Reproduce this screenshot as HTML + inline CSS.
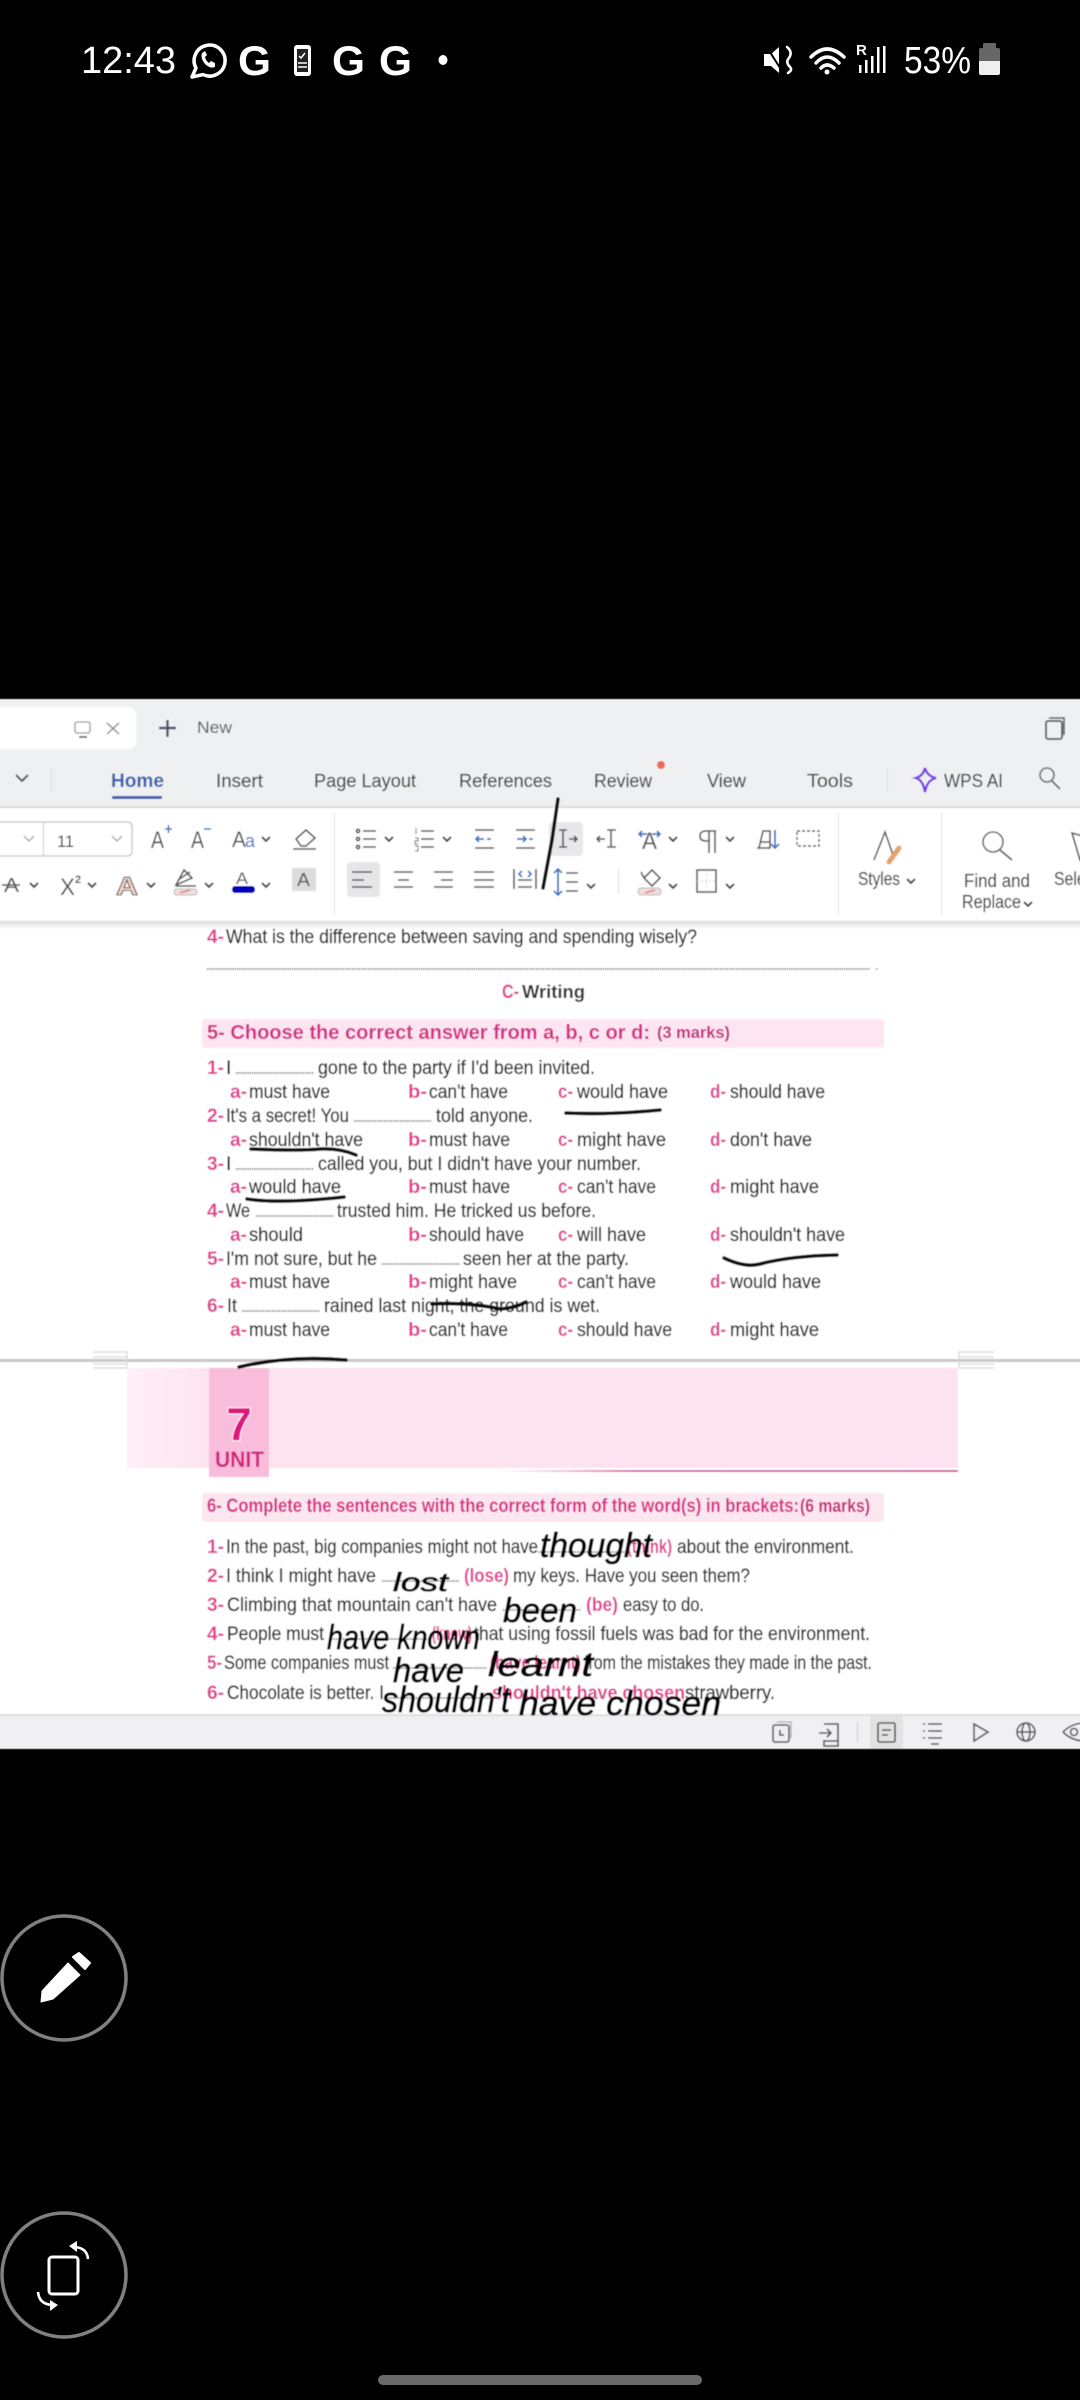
<!DOCTYPE html>
<html>
<head>
<meta charset="utf-8">
<style>
html,body{margin:0;padding:0;background:#000;width:1080px;height:2400px;overflow:hidden}
svg{display:block;position:absolute;left:0;top:0}
text{font-family:"Liberation Sans",sans-serif}
.u{font-size:17px;fill:#555}
.t{font-size:18px;fill:#4a4a4a;stroke:#4a4a4a;stroke-width:.15px}
.d{font-size:19px;fill:#2a2a2a;stroke:#2a2a2a;stroke-width:.25px}
.p{font-size:19px;fill:#e2408f;font-weight:bold}
.h{font-size:19px;fill:#d42e84;font-weight:bold}
.k{font-style:italic;fill:#000;stroke:#000;stroke-width:.7px}
.s{fill:none;stroke:#555;stroke-width:1.6}
.b{fill:none;stroke:#3f74c4;stroke-width:1.8}
.n{fill:none;stroke:#111;stroke-width:3.6;stroke-linecap:round}
.w{fill:none;stroke:#fff;stroke-width:3.5;stroke-linecap:round}
.o{fill:none;stroke:#555;stroke-width:1.6;stroke-dasharray:1.3 1}
</style>
</head>
<body>
<svg width="1080" height="2400" viewBox="0 0 1080 2400" xmlns="http://www.w3.org/2000/svg">
<defs>
<filter id="bl" x="-2%" y="-2%" width="104%" height="104%"><feGaussianBlur stdDeviation="0.55"/></filter>
<path id="c" d="M-4 -2L0 2L4 -2" fill="none" stroke="#444" stroke-width="2"/>
<linearGradient id="fade" x1="0" x2="1" y1="0" y2="0"><stop offset="0" stop-color="#fff0f7"/><stop offset="1" stop-color="#fde3f0"/></linearGradient>
<linearGradient id="ln" x1="0" x2="1" y1="0" y2="0"><stop offset="0" stop-color="#e8b4d0" stop-opacity="0"/><stop offset=".3" stop-color="#d86aa8"/><stop offset="1" stop-color="#d05a9c"/></linearGradient>
<linearGradient id="sh" x1="0" x2="0" y1="0" y2="1"><stop offset="0" stop-color="#e6e6e6"/><stop offset="1" stop-color="#fff"/></linearGradient>
</defs>

<rect width="1080" height="2400" fill="#000"/>

<!-- status bar -->
<g fill="#fff">
<text x="81" y="73" font-size="38" textLength="95" lengthAdjust="spacingAndGlyphs" fill="#fff">12:43</text>
<path d="M192 77L196 68A15.5 15.5 0 1 1 203 74.6Z" fill="none" stroke="#fff" stroke-width="3.5" stroke-linejoin="round"/>
<path d="M202 53Q200 58 205 64Q210 69 215 67L215 63L211 61L209 63Q206 61 205 57L207 55L205 51Z"/>
<text x="238" y="75" font-size="42" font-weight="bold" textLength="33" lengthAdjust="spacingAndGlyphs" fill="#fff">G</text>
<rect x="294" y="45" width="17" height="31" rx="3"/>
<rect x="297" y="49" width="11" height="23" fill="#222"/>
<path d="M299 56l2 2 4-5" fill="none" stroke="#fff" stroke-width="1.5"/>
<path d="M298 63h9M298 67h9" stroke="#fff" stroke-width="1.5"/>
<text x="332" y="75" font-size="42" font-weight="bold" textLength="33" lengthAdjust="spacingAndGlyphs" fill="#fff">G</text>
<text x="379" y="75" font-size="42" font-weight="bold" textLength="33" lengthAdjust="spacingAndGlyphs" fill="#fff">G</text>
<ellipse cx="443" cy="60" rx="4.5" ry="5"/>
<path d="M764 54L771 54L779 47L779 73L771 66L764 66Z"/>
<path d="M787 47Q793 52 789 58Q785 62 790 67Q793 70 788 73" class="w" style="stroke-width:2.5"/>
<path d="M768 49L782 71" stroke="#000" stroke-width="2"/>
<path d="M811 57Q827 41 844 57M816 63Q827 51 839 63M821 68Q827 62 834 68" class="w"/>
<circle cx="827" cy="72" r="2.5"/>
<text x="856" y="55" font-size="15" font-weight="bold" fill="#fff">R</text>
<rect x="859" y="65" width="2.5" height="8"/><rect x="865" y="60" width="2.5" height="13"/><rect x="871" y="56" width="2.5" height="17"/><rect x="877" y="47" width="2.5" height="26"/><rect x="883" y="46" width="2.5" height="27"/>
<text x="904" y="73" font-size="38" textLength="67" lengthAdjust="spacingAndGlyphs" fill="#fff">53%</text>
<path d="M984 43h11q1 0 1 2v3h2q2 0 2 2v11h-21v-11q0-2 2-2h2v-3q0-2 1-2z" fill="#666"/>
<path d="M979 61h21v12q0 2-2 2h-17q-2 0-2-2z" fill="#eee"/>
</g>

<g filter="url(#bl)">
<!-- app background -->
<rect x="-20" y="699" width="1120" height="1050" fill="#fff"/>
<rect x="-20" y="699" width="1120" height="108" fill="#eff0f2"/>
<rect x="-20" y="806" width="1120" height="2" fill="#dcdcdc"/>
<rect x="-20" y="921" width="1120" height="2" fill="#dedede"/>
<rect x="-20" y="923" width="1120" height="6" fill="url(#sh)"/>

<!-- tab strip -->
<path d="M-20 707H128Q136 707 136 715V741Q136 749 128 749H-20Z" fill="#fff"/>
<rect x="75" y="722" width="15" height="11" rx="2" class="s" style="stroke:#aaa"/>
<path d="M79 737h8" class="s"/>
<path d="M107 723L119 734M119 723L107 734" fill="none" stroke="#888" stroke-width="1.5"/>
<path d="M159 728H176M167.500 720V737" fill="none" stroke="#4a5568" stroke-width="2.4"/>
<text x="197" y="733" class="u" textLength="35" lengthAdjust="spacingAndGlyphs">New</text>
<rect x="1046" y="721" width="16" height="18" rx="2" fill="none" stroke="#555" stroke-width="1.8"/>
<path d="M1049 718h15v17" fill="none" stroke="#555" stroke-width="1.6"/>

<!-- menu row -->
<path d="M16 775L22 781L28 775" fill="none" stroke="#555" stroke-width="2"/>
<rect x="51" y="768" width="1" height="24" fill="#ddd"/>
<text x="111" y="787" font-size="19" font-weight="bold" fill="#3a62ac" textLength="53" lengthAdjust="spacingAndGlyphs">Home</text>
<rect x="112" y="796" width="50" height="3" rx="1" fill="#3a62ac"/>
<text x="216" y="787" class="t" textLength="47" lengthAdjust="spacingAndGlyphs">Insert</text>
<text x="314" y="787" class="t" textLength="102" lengthAdjust="spacingAndGlyphs">Page Layout</text>
<text x="459" y="787" class="t" textLength="93" lengthAdjust="spacingAndGlyphs">References</text>
<text x="594" y="787" class="t" textLength="58" lengthAdjust="spacingAndGlyphs">Review</text>
<circle cx="661" cy="765" r="4" fill="#ea6a5e"/>
<text x="707" y="787" class="t" textLength="39" lengthAdjust="spacingAndGlyphs">View</text>
<text x="807" y="787" class="t" textLength="46" lengthAdjust="spacingAndGlyphs">Tools</text>
<rect x="887" y="768" width="1" height="24" fill="#ddd"/>
<path d="M925 768Q927 776 936 778Q927 780 925 792Q923 780 916 778Q923 776 925 768Z" fill="none" stroke="#7a3ce8" stroke-width="2.4"/>
<text x="944" y="787" class="t" textLength="59" lengthAdjust="spacingAndGlyphs">WPS AI</text>
<circle cx="1047" cy="775" r="7" fill="none" stroke="#666" stroke-width="1.6"/><path d="M1052 781L1060 789" stroke="#666" stroke-width="1.8"/>

<!-- ribbon row 1 -->
<path d="M-20 822H127Q132 822 132 827V851Q132 856 127 856H-20Z" fill="#fff" stroke="#ccc" stroke-width="1.5"/>
<rect x="43" y="822" width="1" height="34" fill="#ccc"/>
<path d="M24 836L29 841L34 836M112 836L117 841L122 836" fill="none" stroke="#aaa" stroke-width="1.5"/>
<text x="57" y="847" font-size="17" fill="#333" textLength="17" lengthAdjust="spacingAndGlyphs">11</text>
<text x="151" y="848" font-size="24" fill="#555" textLength="13" lengthAdjust="spacingAndGlyphs">A</text>
<path d="M165 829h7M168.500 825v8" stroke="#3f74c4" stroke-width="1.5"/>
<text x="191" y="848" font-size="24" fill="#555" textLength="13" lengthAdjust="spacingAndGlyphs">A</text>
<path d="M204 829h7" stroke="#3f74c4" stroke-width="1.5"/>
<text x="232" y="847" font-size="22" fill="#555" textLength="14" lengthAdjust="spacingAndGlyphs">A</text>
<text x="245" y="847" font-size="18" fill="#3f74c4" textLength="10" lengthAdjust="spacingAndGlyphs">a</text>
<use href="#c" x="266" y="839"/>
<path d="M296 839L306 830L315 838L306 846H301Z M293 849H316" class="s"/>
<rect x="334" y="813" width="1" height="102" fill="#e0e0e0"/>
<path d="M363 831h13M363 839h13M363 847h13" class="s"/><circle cx="358" cy="831" r="1.6" class="s"/><circle cx="358" cy="839" r="1.6" class="s"/><circle cx="358" cy="847" r="1.6" class="s"/>
<use href="#c" x="389" y="839"/>
<path d="M421 831h13M421 839h13M421 847h13" class="s"/>
<path d="M416 828v6M415 838h3v3h-3v3h3M415 846h3v5h-3" fill="none" stroke="#555" stroke-width="1"/>
<use href="#c" x="447" y="839"/>
<path d="M475 830h19M475 848h19" class="s"/><path d="M476 839h8M479 836l-3 3 3 3M487 839h4" class="b"/>
<path d="M516 830h19M516 848h19" class="s"/><path d="M517 839h9M523 836l3 3-3 3M529 839h4" class="b"/>
<rect x="549" y="822" width="34" height="34" rx="4" fill="#e8e8ea"/>
<path d="M559 830h8M563 830v17M559 847h8" class="s"/><path d="M569 839h8M574 836l3 3-3 3" fill="none" stroke="#555" stroke-width="1.6"/>
<path d="M597 839h8M600 836l-3 3 3 3" class="s"/><path d="M607 830h9M611 830v17M607 847h9" class="s"/>
<text x="642" y="849" font-size="24" fill="#555" textLength="15" lengthAdjust="spacingAndGlyphs">A</text>
<path d="M639 834h8M642 831l-3 3 3 3M652 834h8M657 831l3 3-3 3" class="b"/>
<use href="#c" x="673" y="839"/>
<path d="M716 831H706Q700 831 700 836Q700 841 706 841H709M709 831V853M715 831V853" class="s"/>
<use href="#c" x="730" y="839"/>
<path d="M759 848L763 831H770V848H757M761 842H770" class="s"/><path d="M775 830V848M771 844l4 4 4-4" class="b"/>
<rect x="797" y="831" width="22" height="15" fill="none" stroke="#555" stroke-width="1.4" stroke-dasharray="3 2"/>

<!-- ribbon row 2 -->
<text x="4" y="892" font-size="20" fill="#555" textLength="15" lengthAdjust="spacingAndGlyphs">A</text>
<path d="M2 885H20" stroke="#555" stroke-width="1.4"/>
<use href="#c" x="34" y="885"/>
<text x="60" y="895" font-size="24" fill="#555" textLength="15" lengthAdjust="spacingAndGlyphs">X</text>
<text x="75" y="883" font-size="11" fill="#555" font-weight="bold">2</text>
<use href="#c" x="92" y="885"/>
<text x="116" y="895" font-size="26" font-weight="bold" fill="#f4d5c4" stroke="#666" stroke-width="1.1" textLength="22" lengthAdjust="spacingAndGlyphs">A</text>
<use href="#c" x="151" y="885"/>
<path d="M178 880L190 872M176 885L184 870L192 878L176 885ZM176 886H196" class="s"/>
<rect x="174" y="889" width="23" height="6" rx="3" fill="#f0dede" stroke="#bbb"/><path d="M180 893l10-3" stroke="#e06a5a" stroke-width="1.4"/>
<use href="#c" x="209" y="885"/>
<text x="236" y="884" font-size="17" fill="#555" textLength="12" lengthAdjust="spacingAndGlyphs">A</text>
<rect x="232" y="886" width="23" height="7" rx="3" fill="#0000c0"/>
<use href="#c" x="266" y="885"/>
<rect x="292" y="868" width="24" height="23" fill="#dcdcdc"/>
<text x="297" y="886" font-size="18" fill="#555" textLength="13" lengthAdjust="spacingAndGlyphs">A</text>
<rect x="347" y="862" width="33" height="35" rx="4" fill="#e6e6e8"/>
<path d="M352 872h20M352 880h12M352 887h20" class="s"/>
<path d="M394 872h19M398 880h11M394 887h19" class="s"/>
<path d="M434 872h19M441 880h12M434 887h19" class="s"/>
<path d="M474 872h20M474 880h20M474 887h20" class="s"/>
<path d="M514 869v20M536 869v20M518 880h14M518 887h14" class="s"/><path d="M522 871l-3 3 3 3M528 871l3 3-3 3" class="b"/>
<path d="M558 869V895M554 873l4-4 4 4M554 891l4 4 4-4" class="b"/><path d="M566 873h12M566 882h12M566 891h12" class="s"/>
<use href="#c" x="591" y="886"/>
<rect x="618" y="868" width="1" height="26" fill="#ddd"/>
<path d="M644 878L652 870L660 878L652 886Z M644 878L641 872" class="s"/>
<rect x="638" y="888" width="23" height="7" rx="3" fill="#f0dede" stroke="#bbb"/><path d="M645 893l10-3" stroke="#e06a5a" stroke-width="1.4"/>
<use href="#c" x="673" y="886"/>
<rect x="697" y="870" width="19" height="22" class="s"/><path d="M706.500 870v22M697 881h19" fill="none" stroke="#ccc" stroke-dasharray="2 2"/>
<use href="#c" x="730" y="886"/>

<!-- ribbon right -->
<rect x="838" y="813" width="1" height="102" fill="#e0e0e0"/>
<rect x="941" y="813" width="1" height="102" fill="#e0e0e0"/>
<path d="M874 860L885 832L893 855" class="s"/>
<path d="M889 862L899 848" stroke="#e8a06a" stroke-width="5" stroke-linecap="round"/>
<text x="858" y="885" class="t" textLength="42" lengthAdjust="spacingAndGlyphs">Styles</text>
<use href="#c" x="911" y="881"/>
<circle cx="993" cy="842" r="10" fill="none" stroke="#666" stroke-width="1.6"/><path d="M1000 850L1012 860" stroke="#666" stroke-width="1.8"/>
<text x="964" y="887" class="t" textLength="66" lengthAdjust="spacingAndGlyphs">Find and</text>
<text x="962" y="908" class="t" textLength="59" lengthAdjust="spacingAndGlyphs">Replace</text>
<use href="#c" x="1028" y="904"/>
<text x="1054" y="885" class="t" textLength="44" lengthAdjust="spacingAndGlyphs">Select</text>
<path d="M1072 833L1090 838L1080 860Z" class="s"/>

<!-- pen stroke on ribbon -->
<path d="M558 799L552 840L543 888" fill="none" stroke="#111" stroke-width="3.5" stroke-linecap="round"/>

<!-- document top -->
<text x="207" y="943" class="p" textLength="17" lengthAdjust="spacingAndGlyphs">4-</text>
<text x="226" y="943" class="d" textLength="471" lengthAdjust="spacingAndGlyphs">What is the difference between saving and spending wisely?</text>
<path d="M207 969H870M876 969h2" class="o"/>
<text x="502" y="998" class="p" font-size="18" textLength="17" lengthAdjust="spacingAndGlyphs">C-</text>
<text x="522" y="998" font-size="18" font-weight="bold" fill="#333" textLength="63" lengthAdjust="spacingAndGlyphs">Writing</text>
<rect x="202" y="1019" width="682" height="29" rx="3" fill="#fde6f1"/>
<text x="207" y="1039" class="h" style="font-size:20px" textLength="443" lengthAdjust="spacingAndGlyphs">5- Choose the correct answer from a, b, c or d:</text>
<text x="657" y="1038" font-size="17" font-weight="bold" fill="#c0267a" textLength="73" lengthAdjust="spacingAndGlyphs">(3 marks)</text>

<!-- questions -->
<text x="207" y="1074" class="p" textLength="17" lengthAdjust="spacingAndGlyphs">1-</text>
<text x="226" y="1074" class="d">I</text><path d="M236 1073H314" class="o"/>
<text x="318" y="1074" class="d" textLength="277" lengthAdjust="spacingAndGlyphs">gone to the party if I'd been invited.</text>
<text x="230" y="1098" class="p" textLength="17" lengthAdjust="spacingAndGlyphs">a-</text><text x="249" y="1098" class="d" textLength="81" lengthAdjust="spacingAndGlyphs">must have</text>
<text x="408" y="1098" class="p" textLength="19" lengthAdjust="spacingAndGlyphs">b-</text><text x="429" y="1098" class="d" textLength="79" lengthAdjust="spacingAndGlyphs">can't have</text>
<text x="558" y="1098" class="p" textLength="15" lengthAdjust="spacingAndGlyphs">c-</text><text x="577" y="1098" class="d" textLength="91" lengthAdjust="spacingAndGlyphs">would have</text>
<text x="710" y="1098" class="p" textLength="16" lengthAdjust="spacingAndGlyphs">d-</text><text x="730" y="1098" class="d" textLength="95" lengthAdjust="spacingAndGlyphs">should have</text>

<text x="207" y="1122" class="p" textLength="17" lengthAdjust="spacingAndGlyphs">2-</text>
<text x="226" y="1122" class="d" textLength="123" lengthAdjust="spacingAndGlyphs">It's a secret! You</text><path d="M354 1121H431" class="o"/>
<text x="436" y="1122" class="d" textLength="97" lengthAdjust="spacingAndGlyphs">told anyone.</text>
<text x="230" y="1146" class="p" textLength="17" lengthAdjust="spacingAndGlyphs">a-</text><text x="249" y="1146" class="d" textLength="114" lengthAdjust="spacingAndGlyphs">shouldn't have</text>
<text x="408" y="1146" class="p" textLength="19" lengthAdjust="spacingAndGlyphs">b-</text><text x="429" y="1146" class="d" textLength="81" lengthAdjust="spacingAndGlyphs">must have</text>
<text x="558" y="1146" class="p" textLength="15" lengthAdjust="spacingAndGlyphs">c-</text><text x="577" y="1146" class="d" textLength="89" lengthAdjust="spacingAndGlyphs">might have</text>
<text x="710" y="1146" class="p" textLength="16" lengthAdjust="spacingAndGlyphs">d-</text><text x="730" y="1146" class="d" textLength="82" lengthAdjust="spacingAndGlyphs">don't have</text>

<text x="207" y="1170" class="p" textLength="17" lengthAdjust="spacingAndGlyphs">3-</text>
<text x="226" y="1170" class="d">I</text><path d="M236 1169H314" class="o"/>
<text x="318" y="1170" class="d" textLength="323" lengthAdjust="spacingAndGlyphs">called you, but I didn't have your number.</text>
<text x="230" y="1193" class="p" textLength="17" lengthAdjust="spacingAndGlyphs">a-</text><text x="249" y="1193" class="d" textLength="92" lengthAdjust="spacingAndGlyphs">would have</text>
<text x="408" y="1193" class="p" textLength="19" lengthAdjust="spacingAndGlyphs">b-</text><text x="429" y="1193" class="d" textLength="81" lengthAdjust="spacingAndGlyphs">must have</text>
<text x="558" y="1193" class="p" textLength="15" lengthAdjust="spacingAndGlyphs">c-</text><text x="577" y="1193" class="d" textLength="79" lengthAdjust="spacingAndGlyphs">can't have</text>
<text x="710" y="1193" class="p" textLength="16" lengthAdjust="spacingAndGlyphs">d-</text><text x="730" y="1193" class="d" textLength="89" lengthAdjust="spacingAndGlyphs">might have</text>

<text x="207" y="1217" class="p" textLength="17" lengthAdjust="spacingAndGlyphs">4-</text>
<text x="226" y="1217" class="d" textLength="24" lengthAdjust="spacingAndGlyphs">We</text><path d="M256 1216H334" class="o"/>
<text x="337" y="1217" class="d" textLength="259" lengthAdjust="spacingAndGlyphs">trusted him. He tricked us before.</text>
<text x="230" y="1241" class="p" textLength="17" lengthAdjust="spacingAndGlyphs">a-</text><text x="249" y="1241" class="d" textLength="54" lengthAdjust="spacingAndGlyphs">should</text>
<text x="408" y="1241" class="p" textLength="19" lengthAdjust="spacingAndGlyphs">b-</text><text x="429" y="1241" class="d" textLength="95" lengthAdjust="spacingAndGlyphs">should have</text>
<text x="558" y="1241" class="p" textLength="15" lengthAdjust="spacingAndGlyphs">c-</text><text x="577" y="1241" class="d" textLength="69" lengthAdjust="spacingAndGlyphs">will have</text>
<text x="710" y="1241" class="p" textLength="16" lengthAdjust="spacingAndGlyphs">d-</text><text x="730" y="1241" class="d" textLength="115" lengthAdjust="spacingAndGlyphs">shouldn't have</text>

<text x="207" y="1265" class="p" textLength="17" lengthAdjust="spacingAndGlyphs">5-</text>
<text x="226" y="1265" class="d" textLength="151" lengthAdjust="spacingAndGlyphs">I'm not sure, but he</text><path d="M382 1264H460" class="o"/>
<text x="463" y="1265" class="d" textLength="166" lengthAdjust="spacingAndGlyphs">seen her at the party.</text>
<text x="230" y="1288" class="p" textLength="17" lengthAdjust="spacingAndGlyphs">a-</text><text x="249" y="1288" class="d" textLength="81" lengthAdjust="spacingAndGlyphs">must have</text>
<text x="408" y="1288" class="p" textLength="19" lengthAdjust="spacingAndGlyphs">b-</text><text x="429" y="1288" class="d" textLength="88" lengthAdjust="spacingAndGlyphs">might have</text>
<text x="558" y="1288" class="p" textLength="15" lengthAdjust="spacingAndGlyphs">c-</text><text x="577" y="1288" class="d" textLength="79" lengthAdjust="spacingAndGlyphs">can't have</text>
<text x="710" y="1288" class="p" textLength="16" lengthAdjust="spacingAndGlyphs">d-</text><text x="730" y="1288" class="d" textLength="91" lengthAdjust="spacingAndGlyphs">would have</text>

<text x="207" y="1312" class="p" textLength="17" lengthAdjust="spacingAndGlyphs">6-</text>
<text x="227" y="1312" class="d" textLength="10" lengthAdjust="spacingAndGlyphs">It</text><path d="M242 1311H320" class="o"/>
<text x="324" y="1312" class="d" textLength="276" lengthAdjust="spacingAndGlyphs">rained last night, the ground is wet.</text>
<text x="230" y="1336" class="p" textLength="17" lengthAdjust="spacingAndGlyphs">a-</text><text x="249" y="1336" class="d" textLength="81" lengthAdjust="spacingAndGlyphs">must have</text>
<text x="408" y="1336" class="p" textLength="19" lengthAdjust="spacingAndGlyphs">b-</text><text x="429" y="1336" class="d" textLength="79" lengthAdjust="spacingAndGlyphs">can't have</text>
<text x="558" y="1336" class="p" textLength="15" lengthAdjust="spacingAndGlyphs">c-</text><text x="577" y="1336" class="d" textLength="95" lengthAdjust="spacingAndGlyphs">should have</text>
<text x="710" y="1336" class="p" textLength="16" lengthAdjust="spacingAndGlyphs">d-</text><text x="730" y="1336" class="d" textLength="89" lengthAdjust="spacingAndGlyphs">might have</text>

<!-- page break -->
<rect x="-20" y="1359" width="1120" height="3" fill="#c8c8c8"/>
<path d="M93 1352H127V1368H93M93 1357H127M93 1364H127M994 1352H959V1368H994M959 1357H994M959 1364H994" fill="none" stroke="#d8d8d8" stroke-width="1.2"/>

<!-- unit band -->
<rect x="127" y="1368" width="831" height="100" fill="#fde3f0"/>
<rect x="127" y="1368" width="82" height="100" fill="url(#fade)"/>
<rect x="209" y="1368" width="60" height="109" fill="#f9bcdb"/>
<text x="239" y="1440" font-size="46" font-weight="bold" fill="#e0127f" stroke="#fff" stroke-width="2" paint-order="stroke" text-anchor="middle">7</text>
<text x="215" y="1467" font-size="22" font-weight="bold" fill="#d0267f" textLength="49" lengthAdjust="spacingAndGlyphs">UNIT</text>
<rect x="490" y="1470" width="468" height="2" fill="url(#ln)"/>

<!-- section 6 -->
<rect x="202" y="1493" width="682" height="29" rx="3" fill="#fce6f0"/>
<text x="207" y="1512" class="h" textLength="592" lengthAdjust="spacingAndGlyphs">6- Complete the sentences with the correct form of the word(s) in brackets:</text>
<text x="800" y="1512" font-size="18" font-weight="bold" fill="#c0267a" textLength="70" lengthAdjust="spacingAndGlyphs">(6 marks)</text>

<text x="207" y="1553" class="p" textLength="17" lengthAdjust="spacingAndGlyphs">1-</text>
<text x="226" y="1553" class="d" textLength="312" lengthAdjust="spacingAndGlyphs">In the past, big companies might not have</text><path d="M538 1552H627" class="o"/>
<text x="627" y="1553" class="p" textLength="45" lengthAdjust="spacingAndGlyphs">(think)</text>
<text x="677" y="1553" class="d" textLength="177" lengthAdjust="spacingAndGlyphs">about the environment.</text>

<text x="207" y="1582" class="p" textLength="17" lengthAdjust="spacingAndGlyphs">2-</text>
<text x="226" y="1582" class="d" textLength="150" lengthAdjust="spacingAndGlyphs">I think I might have</text><path d="M382 1581H459" class="o"/>
<text x="464" y="1582" class="p" textLength="45" lengthAdjust="spacingAndGlyphs">(lose)</text>
<text x="513" y="1582" class="d" textLength="237" lengthAdjust="spacingAndGlyphs">my keys. Have you seen them?</text>

<text x="207" y="1611" class="p" textLength="17" lengthAdjust="spacingAndGlyphs">3-</text>
<text x="227" y="1611" class="d" textLength="270" lengthAdjust="spacingAndGlyphs">Climbing that mountain can't have</text><path d="M503 1610H581" class="o"/>
<text x="586" y="1611" class="p" textLength="32" lengthAdjust="spacingAndGlyphs">(be)</text>
<text x="623" y="1611" class="d" textLength="81" lengthAdjust="spacingAndGlyphs">easy to do.</text>

<text x="207" y="1640" class="p" textLength="17" lengthAdjust="spacingAndGlyphs">4-</text>
<text x="227" y="1640" class="d" textLength="97" lengthAdjust="spacingAndGlyphs">People must</text><path d="M329 1639H432" class="o"/>
<text x="432" y="1640" class="p" textLength="40" lengthAdjust="spacingAndGlyphs">(know)</text>
<text x="474" y="1640" class="d" textLength="396" lengthAdjust="spacingAndGlyphs">that using fossil fuels was bad for the environment.</text>

<text x="207" y="1669" class="p" textLength="15" lengthAdjust="spacingAndGlyphs">5-</text>
<text x="224" y="1669" class="d" textLength="165" lengthAdjust="spacingAndGlyphs">Some companies must</text><path d="M393 1668H487" class="o"/>
<text x="490" y="1669" class="p" textLength="91" lengthAdjust="spacingAndGlyphs">(have learnt)</text>
<text x="584" y="1669" class="d" textLength="288" lengthAdjust="spacingAndGlyphs">from the mistakes they made in the past.</text>

<text x="207" y="1699" class="p" textLength="17" lengthAdjust="spacingAndGlyphs">6-</text>
<text x="227" y="1699" class="d" textLength="157" lengthAdjust="spacingAndGlyphs">Chocolate is better. I</text><path d="M386 1698H490" class="o"/>
<text x="492" y="1699" class="p" textLength="193" lengthAdjust="spacingAndGlyphs">shouldn't have chosen</text>
<text x="685" y="1699" class="d" textLength="90" lengthAdjust="spacingAndGlyphs">strawberry.</text>

<!-- bottom bar -->
<rect x="-20" y="1715" width="1120" height="34" fill="#f0f0f2"/>
<rect x="-20" y="1714" width="1120" height="2" fill="#dedede"/>
<rect x="773" y="1725" width="16" height="17" rx="2" class="s"/><path d="M777 1722h14v16" fill="none" stroke="#aaa" stroke-width="1.2"/><path d="M780 1730v5h4" class="s"/>
<path d="M824 1724H838V1746H824V1740M819 1733H831M827 1729l4 4-4 4M824 1741H838" class="s"/>
<rect x="857" y="1722" width="1" height="20" fill="#ccc"/>
<rect x="870" y="1716" width="33" height="33" rx="3" fill="#e2e2e2"/>
<rect x="878" y="1723" width="17" height="19" rx="1.500" class="s"/><path d="M882 1730h9M882 1735h6" class="s"/>
<path d="M928 1724h14M928 1731h14M928 1738h14M931 1744h8" class="s"/><path d="M923 1724h2M923 1731h2M923 1738h2" class="s"/>
<path d="M974 1724L988 1732L974 1741Z" class="s"/>
<circle cx="1026" cy="1732" r="9" class="s"/><ellipse cx="1026" cy="1732" rx="4" ry="9" class="s"/><path d="M1017 1732h18" class="s"/>
<path d="M1063 1732Q1072 1723 1085 1723M1063 1732Q1072 1741 1085 1741" class="s"/><circle cx="1074" cy="1732" r="3.500" class="s"/>

<!-- pen annotations -->
<path d="M566 1113Q610 1115 660 1110" class="n"/>
<path d="M251 1149Q300 1151 320 1149Q340 1148 356 1155" class="n"/>
<path d="M247 1199Q280 1204 344 1197" class="n"/>
<path d="M724 1258Q745 1268 760 1264Q790 1256 837 1255" class="n"/>
<path d="M432 1304Q470 1302 500 1309Q515 1308 526 1302" class="n"/>
<path d="M239 1367Q290 1355 346 1360" class="n"/>

<!-- handwritten answers -->
<text x="540" y="1557" class="k" font-size="34" textLength="112" lengthAdjust="spacingAndGlyphs">thought</text>
<text x="393" y="1591" class="k" font-size="26" textLength="55" lengthAdjust="spacingAndGlyphs">lost</text>
<text x="503" y="1622" class="k" font-size="34" textLength="74" lengthAdjust="spacingAndGlyphs">been</text>
<text x="327" y="1649" class="k" font-size="34" textLength="153" lengthAdjust="spacingAndGlyphs">have known</text>
<text x="393" y="1682" class="k" font-size="34" textLength="71" lengthAdjust="spacingAndGlyphs">have</text>
<text x="488" y="1676" class="k" font-size="34" textLength="105" lengthAdjust="spacingAndGlyphs">learnt</text>
<text x="382" y="1712" class="k" font-size="36" textLength="128" lengthAdjust="spacingAndGlyphs">shouldn't</text>
<text x="519" y="1715" class="k" font-size="34" textLength="202" lengthAdjust="spacingAndGlyphs">have chosen</text>
</g>

<!-- floating buttons -->
<circle cx="64" cy="1978" r="62" fill="#000" stroke="#808080" stroke-width="3.5"/>
<path d="M41 2002L42 1991L68 1963L80 1975L53 1999Z" fill="#fff" stroke="#fff" stroke-linejoin="round"/>
<path d="M73 1957L79 1953L90 1963L85 1969Z" fill="#fff" stroke="#fff" stroke-width="2" stroke-linejoin="round"/>
<circle cx="64" cy="2275" r="62" fill="#000" stroke="#808080" stroke-width="3.5"/>
<rect x="49" y="2257" width="29" height="37" rx="3" fill="none" stroke="#fff" stroke-width="3"/>
<path d="M88 2259Q87 2248 75 2247" fill="none" stroke="#fff" stroke-width="2.6"/>
<path d="M69 2246L77 2241L77 2252Z" fill="#fff"/>
<path d="M38 2292Q39 2304 52 2305" fill="none" stroke="#fff" stroke-width="2.6"/>
<path d="M58 2305L50 2300L50 2311Z" fill="#fff"/>

<!-- home indicator -->
<rect x="378" y="2375" width="324" height="10" rx="5" fill="#6a6a6a"/>
</svg>
</body>
</html>
